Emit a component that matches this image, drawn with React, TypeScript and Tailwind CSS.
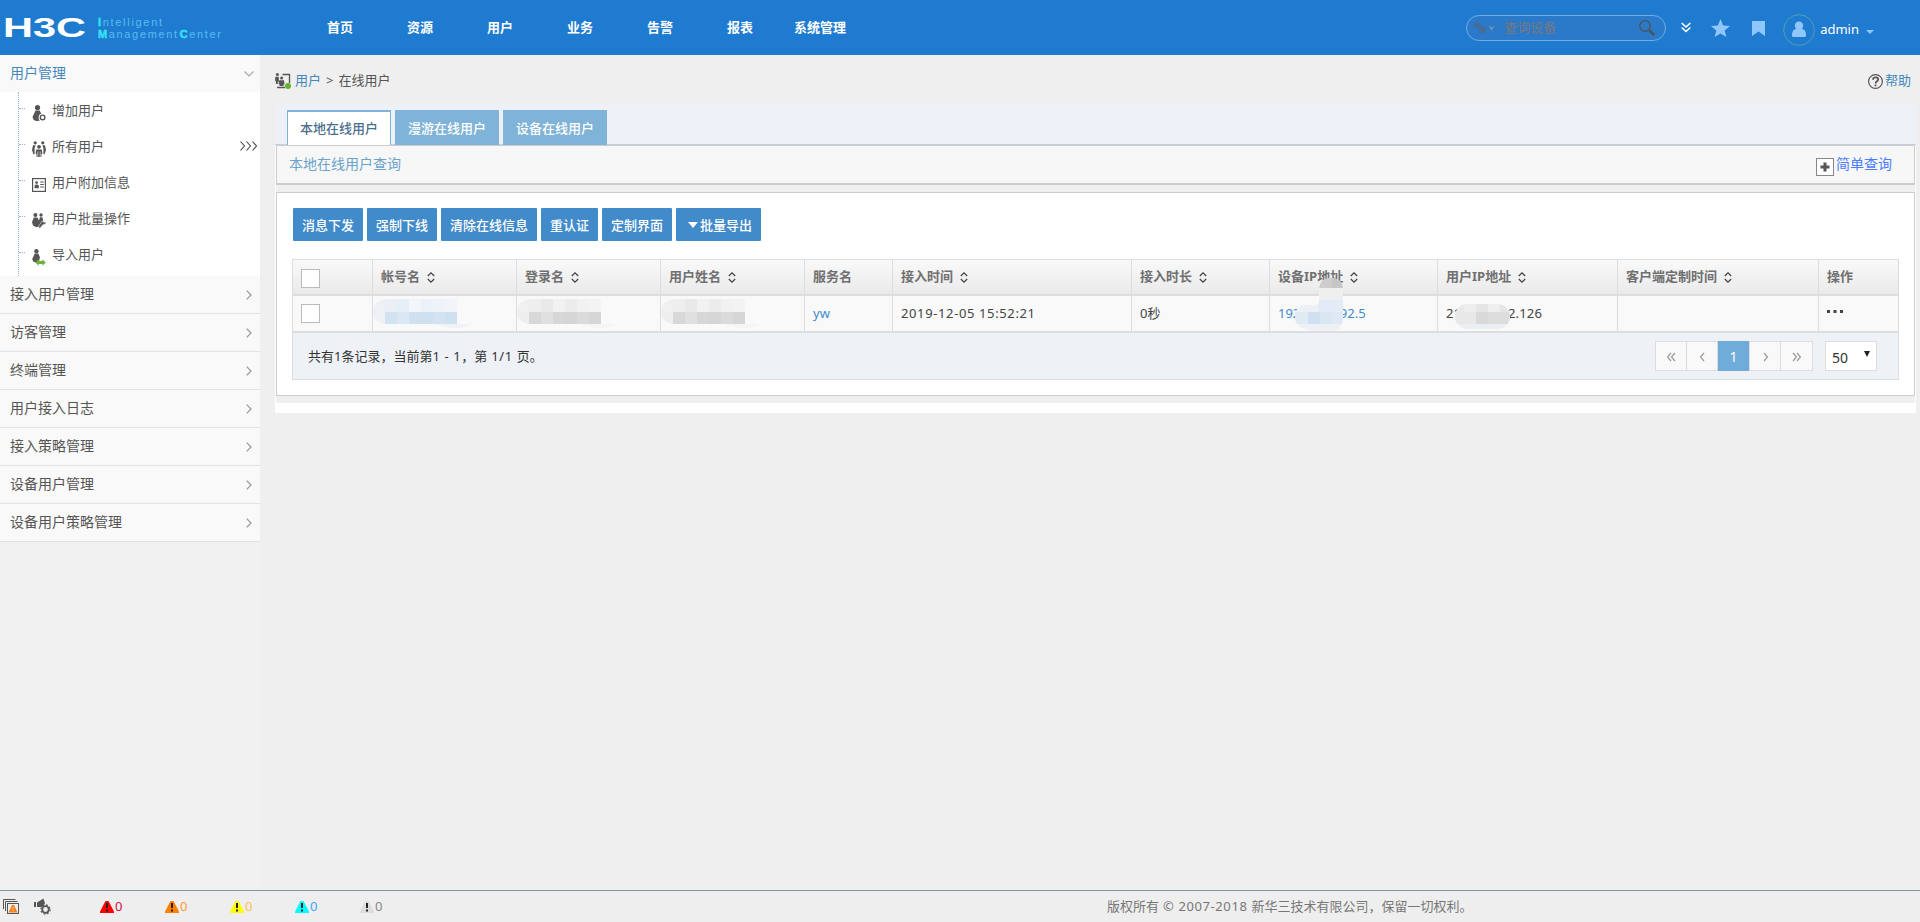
import type { ReactNode } from "react";

const NAV = ["首页", "资源", "用户", "业务", "告警", "报表", "系统管理"];
const MENUS = ["接入用户管理", "访客管理", "终端管理", "用户接入日志", "接入策略管理", "设备用户管理", "设备用户策略管理"];
const DARK = "#555555";

function Person({ x = 0, y = 0, s = 1 }: { x?: number; y?: number; s?: number }) {
  return (
    <g transform={`translate(${x} ${y}) scale(${s})`}>
      <circle cx="5" cy="2.6" r="2.6" />
      <path d="M3 5.4h4.2l2 4.400-1 5.200c-2 1.300-5 1.300-7 0L0 12z" />
    </g>
  );
}

const ICONS: Record<string, ReactNode> = {
  add: (
    <>
      <Person x={0.5} y={0} s={1} />
      <circle cx="10.6" cy="12.4" r="4" fill="#fff" />
      <circle cx="10.6" cy="12.4" r="2.3" fill="none" stroke={DARK} strokeWidth="1.4" />
    </>
  ),
  all: (
    <>
      <circle cx="3.2" cy="1.8" r="1.6" />
      <circle cx="10.8" cy="1.8" r="1.6" />
      <path d="M1 4.200h2.600l-1 3v6H1.400L0 9zM13 4.200h-2.600l1 3v6h1.200L14 9z" />
      <circle cx="7" cy="5.8" r="1.9" />
      <path d="M4.200 8.400h5.600l.6 4-1 .8V16H4.600v-2.800l-1-.8z" />
      <path d="M5.800 10.500v5.500M8.200 10.500v5.500" stroke="#fff" strokeWidth=".6" />
    </>
  ),
  card: (
    <>
      <rect x=".6" y="1.6" width="12.8" height="12.8" fill="#fff" stroke={DARK} strokeWidth="1.2" />
      <circle cx="4.6" cy="5.6" r="1.4" />
      <path d="M2.6 11.200V8.600L4 7.400h1.400l1.400 1.200v2.600z" />
      <path d="M8.200 5h3.600M8.200 7.500h3.600M8.200 10h3.600" stroke={DARK} strokeWidth="1.200" />
    </>
  ),
  batch: (
    <>
      <circle cx="3.4" cy="2" r="2" />
      <circle cx="9" cy="2" r="1.7" />
      <path d="M1.800 4.400h3.600l1.600 3.200 1-3.400h2.400l.8 3-3.400 6-3.200 1L1 12.600 0 9z" />
      <path d="M13.600 6.600l-2.200 2-1.600-.4-3.400 5.600 1.400 1.600 3.400-4c1.800.4 3.200-.8 2.800-2.600l-1.800.8-.6-1.200z" stroke="#fff" strokeWidth=".5" />
    </>
  ),
  import: (
    <>
      <Person x={0.2} y={0} s={0.84} />
      <path d="M3.200 13.500l3.400-3.300v1.700h3.800v-1.700l3.400 3.300-3.400 3.300v-1.700H6.600v1.700z" fill="#6cb33f" />
    </>
  ),
};

const ITEMS: { icon: string; text: string; more?: boolean }[] = [
  { icon: "add", text: "增加用户" },
  { icon: "all", text: "所有用户", more: true },
  { icon: "card", text: "用户附加信息" },
  { icon: "batch", text: "用户批量操作" },
  { icon: "import", text: "导入用户" },
];

function Header() {
  return (
    <header className="flex h-[55px] shrink-0 bg-[#1f7bcf] text-white">
      <svg className="h-[55px] w-[300px] shrink-0" viewBox="0 0 300 55" fontFamily="Liberation Sans, sans-serif">
        <text x="3" y="37" fontSize="28" fontWeight="700" fill="#fff" textLength="83" lengthAdjust="spacingAndGlyphs">H3C</text>
        <text x="98" y="26" fontSize="11" fill="#55bdf2" textLength="64">
          <tspan fill="#37e0f7" stroke="#37e0f7" strokeWidth=".5" fontWeight="700">I</tspan>ntelligent
        </text>
        <text x="98" y="38" fontSize="11" fill="#55bdf2" textLength="123">
          <tspan fill="#37e0f7" stroke="#37e0f7" strokeWidth=".5" fontWeight="700">M</tspan>anagement<tspan fill="#37e0f7" stroke="#37e0f7" strokeWidth=".5" fontWeight="700" dx="1">C</tspan>enter
        </text>
      </svg>
      <nav className="flex h-[55px] items-center pt-px text-[13px] font-bold">
        {NAV.map((n) => (
          <span key={n} className="w-20 text-center">{n}</span>
        ))}
      </nav>
      <div className="mt-[15px] ml-auto flex h-[26px] w-[200px] shrink-0 items-center rounded-full border border-[#74abe2] bg-[#2b79c9] pl-[7px]">
        <svg width="22" height="14" viewBox="0 0 22 14">
          <path d="M0 1.500h6.500V6l1.500-.5 4 .5v5l-3 2-4-2V8L0 6z" fill="#426d9c" />
          <path d="M15.500 5.500l2 2.800 2-2.800" fill="none" stroke="#7391b2" strokeWidth="1.500" />
        </svg>
        <span className="ml-2 text-[13px] text-[#777780]">查询设备</span>
        <svg className="mr-[9px] ml-auto" width="18" height="18" viewBox="0 0 18 18" fill="none" stroke="#4e5359">
          <circle cx="7" cy="7" r="5.300" strokeWidth="1.300" />
          <path d="M11.200 11.200l5 5" strokeWidth="2.600" />
        </svg>
      </div>
      <svg className="mt-[22px] ml-[15px] shrink-0" width="10" height="11" viewBox="0 0 10 11" fill="none" stroke="#fff" strokeWidth="1.600">
        <path d="M.7 1l4.300 4L9.300 1M.7 5.500l4.300 4 4.300-4" />
      </svg>
      <svg className="mt-[19px] ml-5 shrink-0" width="19" height="18" viewBox="0 0 19 18" fill="#8fc6fb">
        <path d="M9.500 0l2.600 6.400 6.900.5-5.300 4.500 1.700 6.600-5.900-3.600L3.600 18l1.700-6.600L0 6.900l6.900-.5z" />
      </svg>
      <svg className="mt-[21px] ml-[22px] shrink-0" width="13" height="15" viewBox="0 0 13 15" fill="#8fc6fb">
        <path d="M0 0h13v15l-6.500-4.500L0 15z" />
      </svg>
      <svg className="mt-[14px] ml-[18px] shrink-0" width="32" height="32" viewBox="0 0 32 32">
        <circle cx="16" cy="16" r="15.300" fill="none" stroke="#52a0ae" />
        <circle cx="16" cy="11.800" r="4.200" fill="#8fc6fb" />
        <path d="M9 21c0-4 2-6 4.500-6h5c2.500 0 4.500 2 4.500 6 0 1.500-.5 2-1.500 2h-11C9.500 23 9 22.500 9 21z" fill="#8fc6fb" />
      </svg>
      <span className="mt-[20px] ml-[5px] text-[13px] leading-[18px]">admin</span>
      <svg className="mt-[30px] mr-[46px] ml-[7px] shrink-0" width="8" height="4" viewBox="0 0 8 4"><path d="M0 0h8L4 4z" fill="#8fc6fb" /></svg>
    </header>
  );
}

function Sidebar() {
  return (
    <aside className="w-[260px] shrink-0 bg-[#f1f1f1] text-[#555]">
      <div className="flex h-[37px] items-center justify-between bg-[#f9f9f9] pr-[6px] pl-[10px] text-sm text-[#4488bb]">
        <span className="pb-[2px]">用户管理</span>
        <svg width="10" height="6" viewBox="0 0 10 6" fill="none" stroke="#aaa" strokeWidth="1.200"><path d="M.5.5L5 5 9.500.5" /></svg>
      </div>
      <div className="h-[184px] bg-white pl-[18px]">
        <div className="h-full border-l border-dotted border-[#8fb4d0]">
          {ITEMS.map((it) => (
            <div key={it.icon} className="flex h-9 pr-[3px] text-[13px]">
              <span className="mt-4 h-px w-[6px] border-t border-dotted border-[#8fb4d0]" />
              <svg className="mt-[13px] ml-[7px]" width="14" height="17" viewBox="0 0 14 17" fill={DARK}>{ICONS[it.icon]}</svg>
              <span className="ml-[6px] leading-[36px]">{it.text}</span>
              {it.more && (
                <svg className="mt-[13px] ml-auto" width="17" height="10" viewBox="0 0 17 10" fill="none" stroke="#444" strokeWidth="1.100">
                  <path d="M.5.5L4.500 5l-4 4.500M6.500.5l4 4.500-4 4.500M12.500.5l4 4.500-4 4.500" />
                </svg>
              )}
            </div>
          ))}
        </div>
      </div>
      {MENUS.map((m) => (
        <div key={m} className="flex h-[38px] items-center justify-between border-b border-[#e2e2e2] bg-[#f9f9f9] pr-2 pl-[10px] text-sm">
          <span className="pb-[2px]">{m}</span>
          <svg width="6" height="10" viewBox="0 0 6 10" fill="none" stroke="#999" strokeWidth="1.200"><path d="M.7.7L5 5 .7 9.300" /></svg>
        </div>
      ))}
    </aside>
  );
}

function Sort() {
  return (
    <svg className="ml-[7px] shrink-0" width="8" height="11" viewBox="0 0 8 11" fill="none" stroke="#444" strokeWidth="1.300">
      <path d="M.8 4L4 .9 7.200 4M.8 7L4 10.100 7.200 7" />
    </svg>
  );
}

const COLS: { label: string; sort: boolean }[] = [
  { label: "帐号名", sort: true },
  { label: "登录名", sort: true },
  { label: "用户姓名", sort: true },
  { label: "服务名", sort: false },
  { label: "接入时间", sort: true },
  { label: "接入时长", sort: true },
  { label: "设备IP地址", sort: true },
  { label: "用户IP地址", sort: true },
  { label: "客户端定制时间", sort: true },
  { label: "操作", sort: false },
];
const GRID = "grid grid-cols-[79px_144px_144px_144px_88px_239px_138px_168px_180px_201px_80px]";
const CELL = "relative flex items-center border-l border-[#dddddd] pl-2";

function Mosaic({ id, blue }: { id: string; blue?: boolean }) {
  const top = blue ? ["#edf1f6", "#e9eff5", "#e6eef7", "#f2f6fa", "#eaf1f8", "#eef3f8", "#f1f5f9"] : ["#f0f0f0", "#eeeeee", "#e9e9e9", "#f2f2f2", "#ececec", "#f1f1f1", "#f3f3f3"];
  const low = blue ? ["#edf1f6", "#d1e2f0", "#dbe7f2", "#cfe1f0", "#cfe1f0", "#d3e3f1", "#cfe1f0"] : ["#eeeeee", "#d8d8d8", "#e0e0e0", "#d7d7d7", "#d5d5d5", "#dbdbdb", "#d6d6d6"];
  return (
    <svg className="absolute top-[3px] left-0" width="100" height="30" viewBox="0 0 100 30">
      <clipPath id={id}><path d="M12 0h70q2 0 2 2v23H12Q0 23 0 13 0 2 12 0z" /></clipPath>
      <path d="M60 25h38q-8 5-18 4z" fill={blue ? "#eff2f6" : "#f3f4f6"} />
      <g clipPath={`url(#${id})`}>
        {top.map((c, i) => <rect key={i} x={i * 12} y="0" width="12" height="13" fill={c} />)}
        {low.map((c, i) => <rect key={i} x={i * 12} y="13" width="12" height="12" fill={c} />)}
      </g>
    </svg>
  );
}

function Table() {
  return (
    <div className="mt-[18px] ml-[15px] h-[121px] w-[1607px] border border-[#dddddd] text-[13px]">
      <div className={`${GRID} h-[36px] border-b-2 border-[#dddddd] bg-linear-to-b from-[#f9f9f9] to-[#eaeaea] font-bold text-[#707070]`}>
        <div className="flex items-center pt-[2px] pl-2"><span className="h-[19px] w-[19px] border border-[#bbbbbb] bg-white" /></div>
        {COLS.map((c) => (
          <div key={c.label} className={CELL}>{c.label}{c.sort && <Sort />}</div>
        ))}
      </div>
      <div className={`${GRID} h-[37px] border-b-2 border-[#dddddd] bg-[#f9f9f9] text-[#444]`}>
        <div className="flex items-center pl-2"><span className="h-[19px] w-[19px] border border-[#bbbbbb] bg-white" /></div>
        <div className={CELL}><Mosaic id="m1" blue /></div>
        <div className={CELL}><Mosaic id="m2" /></div>
        <div className={CELL}><Mosaic id="m3" /></div>
        <div className={`${CELL} text-[#428bca]`}>yw</div>
        <div className={CELL}><span className="tracking-[0.62px]">2019-12-05 15:52:21</span></div>
        <div className={CELL}>0秒</div>
        <div className={`${CELL} text-[#428bca]`}>
          <span>192.</span><span className="ml-[36px]">92.5</span>
          <svg className="absolute -top-[18px] left-[24px]" width="52" height="54" viewBox="0 0 52 54">
            <clipPath id="m4"><path d="M25 11Q26 0 37 0t12 11v27Q49 53 36 53H18Q0 50 1 38 2 25 17 27q8 1 8-4z" /></clipPath>
            <g clipPath="url(#m4)">
              <rect width="52" height="54" fill="#edf1f5" />
              <rect x="24" width="14" height="10" fill="#cdcdcd" />
              <rect x="38" width="14" height="10" fill="#c6c6c6" />
              <rect x="24" y="10" width="28" height="12" fill="#efeff0" />
              <rect x="24" y="22" width="28" height="12" fill="#e3ebf6" />
              <rect y="34" width="14" height="12" fill="#dfeaf3" />
              <rect x="14" y="34" width="12" height="12" fill="#cfe1f1" />
              <rect x="26" y="34" width="12" height="12" fill="#dae7f3" />
              <rect x="38" y="34" width="14" height="12" fill="#dfe9f5" />
            </g>
          </svg>
        </div>
        <div className={CELL}>
          <span>21</span><span className="ml-[47px] tracking-[0.2px]">2.126</span>
          <svg className="absolute top-[8px] left-[17px]" width="55" height="25" viewBox="0 0 55 25">
            <clipPath id="m5"><rect width="55" height="25" rx="12.500" /></clipPath>
            <g clipPath="url(#m5)">
              <rect width="55" height="25" fill="#ebeff4" />
              <rect width="22" height="20" fill="#e8e8e8" />
              <rect x="9" width="12" height="8" fill="#eeeeee" />
              <rect x="21" width="12" height="8" fill="#e5e5e5" />
              <rect x="33" width="12" height="8" fill="#efefef" />
              <rect x="45" width="12" height="8" fill="#e5e5e5" />
              <rect x="21" y="8" width="12" height="12" fill="#d9d9d9" />
              <rect x="33" y="8" width="24" height="12" fill="#dddddd" />
            </g>
          </svg>
        </div>
        <div className={CELL} />
        <div className={CELL}>
          <svg className="mb-[5px]" width="17" height="3" viewBox="0 0 17 3" fill="#444"><path d="M0 0h3v3H0zM6.500 0h3v3h-3zM13 0h3v3h-3z" /></svg>
        </div>
      </div>
      <div className="flex h-[46px] items-center bg-[#eef1f6] pr-[21px] pl-[15px] text-[#333]">
        <span className="pt-px">
          共有1条记录，当前第<span className="tracking-[0.6px]">1 - 1</span>，第<span className="tracking-[0.6px]"> 1/1 </span>页。
        </span>
        <div className="ml-auto flex h-[30px] divide-x divide-[#dddddd] border border-[#dddddd] bg-[#f9f9f9] text-[#999]">
          <PageKey w="w-[31px]"><path d="M8 1L4.500 5 8 9M4 1L.5 5 4 9" /></PageKey>
          <PageKey w="w-[31px]"><path d="M6 1L2.500 5 6 9" /></PageKey>
          <span className="-my-px flex w-[32px] items-center justify-center bg-[#70acd9] pt-px text-sm text-white">1</span>
          <PageKey w="w-[31px]"><path d="M3 1l3.500 4L3 9" /></PageKey>
          <PageKey w="w-[31px]"><path d="M1 1l3.500 4L1 9M5 1l3.500 4L5 9" /></PageKey>
        </div>
        <div className="ml-3 flex h-[30px] w-[52px] items-center justify-between border border-[#dddddd] bg-white pr-[6px] pl-[6px]">
          <span className="pt-[3px] text-sm">50</span>
          <svg className="mb-1" width="6" height="6" viewBox="0 0 6 6"><path d="M0 0h6L3 6z" fill="#222" /></svg>
        </div>
      </div>
    </div>
  );
}

function PageKey({ w, children }: { w: string; children: ReactNode }) {
  return (
    <span className={`${w} flex items-center justify-center pt-[2px]`}>
      <svg width="9" height="10" viewBox="0 0 9 10" fill="none" stroke="#999" strokeWidth="1.200">{children}</svg>
    </span>
  );
}

const BUTTONS = ["消息下发", "强制下线", "清除在线信息", "重认证", "定制界面"];

function Main() {
  return (
    <main className="w-[1660px] pl-[15px] text-[13px]">
      <div className="flex h-[49px] items-center pt-[3px] text-[#555]">
        <svg width="16" height="16" viewBox="0 0 16 16" fill={DARK}>
          <circle cx="2.400" cy="1.600" r="1.500" />
          <path d="M.4 3.800h3.400v5l-1 .2v2H1V8.500l-1-1z" />
          <circle cx="6.600" cy="5" r="1.500" />
          <path d="M4.200 7.200H9l.6 4-1 .3v1.500h-4v-1.500l-1-.3z" />
          <path d="M7.500 1.500h7V10M2 14.500h8" fill="none" stroke={DARK} strokeWidth="1.300" />
          <circle cx="13" cy="13" r="3" fill="#65b32e" />
        </svg>
        <span className="ml-1 text-[#4488bb]">用户</span>
        <span className="mx-[5px]">&gt;</span>
        <span>在线用户</span>
        <span className="mr-[9px] ml-auto flex items-center gap-[2px] text-[#3f87bb]">
          <svg width="15" height="15" viewBox="0 0 15 15" fill="none" stroke={DARK}>
            <circle cx="7.500" cy="7.500" r="6.900" strokeWidth="1.200" />
            <path d="M5 5.800c0-3.200 5.200-3 5.200-.2 0 1.700-2.600 1.700-2.600 3.800M7.500 10.400v1.800" strokeWidth="1.800" />
          </svg>
          帮助
        </span>
      </div>
      <div className="flex h-[41px] w-[1641px] items-end gap-1 border-b border-[#c5d0dc] bg-[#edf1f7] pl-3">
        <span className="-mb-px h-[35px] w-[104px] border-x border-t-2 border-[#7fb3d8] bg-white text-center leading-[32px] font-medium text-[#4c6f8c]">本地在线用户</span>
        <span className="-mb-px h-[35px] w-[104px] bg-[#7fb3d8] text-center leading-[36px] font-medium text-white">漫游在线用户</span>
        <span className="-mb-px h-[35px] w-[104px] bg-[#7fb3d8] text-center leading-[36px] font-medium text-white">设备在线用户</span>
      </div>
      <div className="w-[1641px] bg-white px-px pb-[10px]">
        <div className="bg-[#efefef] pb-[7px]">
          <div className="flex h-[40px] items-center border border-b-2 border-[#cccccc] bg-[#f7f7f7] pr-[22px] pl-3 text-sm">
            <span className="pb-[2px] text-[#6aa3cc]">本地在线用户查询</span>
            <svg className="mt-1 mr-[2px] ml-auto" width="18" height="18" viewBox="0 0 18 18">
              <rect x=".5" y=".5" width="17" height="17" fill="#fff" stroke="#888" />
              <path d="M9 4.500v9M4.500 9h9" stroke="#555" strokeWidth="3" />
            </svg>
            <span className="pb-[2px] text-[#4a7dff]">简单查询</span>
          </div>
          <div className="mt-[7px] h-[204px] border border-[#cccccc] bg-white pt-[15px]">
            <div className="ml-4 flex h-[33px] gap-1 leading-[35px] font-medium text-white">
              {BUTTONS.map((b) => (
                <span key={b} className="h-[33px] rounded-[1px] bg-[#428bca] px-[9px]">{b}</span>
              ))}
              <span className="flex h-[33px] items-center rounded-[1px] bg-[#428bca] pr-[9px] pl-[12px]">
                <svg className="mr-[2px]" width="10" height="6" viewBox="0 0 10 6" fill="#fff"><path d="M0 0h10L5 6z" /></svg>
                <span className="pt-px">批量导出</span>
              </span>
            </div>
            <Table />
          </div>
        </div>
      </div>
    </main>
  );
}

function Alarm({ fill, children }: { fill: string; children: ReactNode }) {
  return (
    <span className="flex w-[65px] items-center">
      <svg className="mt-px mr-px shrink-0" width="14" height="12" viewBox="0 0 14 12">
        <path d="M5.500 0h3L14 10.500V12H0v-1.500z" fill={fill} />
        <path d="M7 2v5M7 8.500v2" stroke="#222" strokeWidth="2" />
      </svg>
      {children}
    </span>
  );
}

function Footer() {
  return (
    <footer className="flex h-8 shrink-0 items-center border-t border-[#84959b] bg-[#eeeeee] pl-[3px] text-[13px] text-[#777]">
      <svg width="16" height="15" viewBox="0 0 16 15" fill="none" stroke={DARK}>
        <path d="M.5 10V.5h12M2.500 12V2.500h12" />
        <rect x="4.500" y="4.500" width="11" height="10" fill="#eee" />
        <path d="M9 6h2l3.500 7.500h-9z" fill="#f58220" stroke="none" />
        <path d="M10 8v2.500M10 11.200v1" stroke="#fbd0a0" />
      </svg>
      <svg className="ml-[15px] w-[66px]" width="66" height="17" viewBox="0 0 66 17" fill={DARK}>
        <path d="M0 4h2v5H0zM3 4.500L9.500.5 11 5.500 8 9H3z" />
        <circle cx="11.500" cy="11.500" r="3.300" fill="none" stroke={DARK} strokeWidth="1.800" />
        <circle cx="11.500" cy="11.500" r="4.600" fill="none" stroke={DARK} strokeWidth="1.200" strokeDasharray="1.800 1.810" />
      </svg>
      <Alarm fill="#ff0000"><span className="text-[#d8103c]">0</span></Alarm>
      <Alarm fill="#ff8000"><span className="text-[#ff9a2e]">0</span></Alarm>
      <Alarm fill="#ffff00"><span className="text-[#ffc04a]">0</span></Alarm>
      <Alarm fill="#00ffff"><span className="text-[#3fa9f5]">0</span></Alarm>
      <Alarm fill="#dddddd"><span className="text-[#888]">0</span></Alarm>
      <span className="ml-[682px] pt-px">版权所有<span className="tracking-[0.6px]"> © 2007-2018 </span>新华三技术有限公司，保留一切权利。</span>
    </footer>
  );
}

export default function App() {
  return (
    <div className="flex h-[922px] w-[1920px] flex-col overflow-hidden bg-[#efefef] font-['Noto_Sans','Noto_Sans_CJK_SC',sans-serif]">
      <Header />
      <div className="flex min-h-0 flex-1">
        <Sidebar />
        <Main />
      </div>
      <Footer />
    </div>
  );
}
